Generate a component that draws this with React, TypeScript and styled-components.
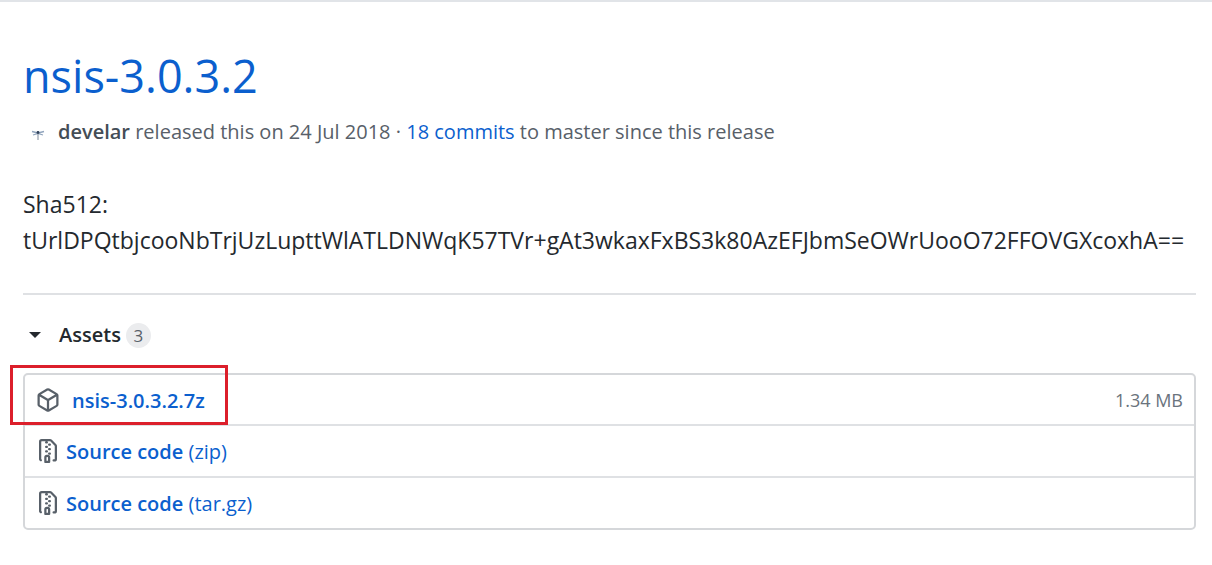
import React from "react";
import styled, { createGlobalStyle } from "styled-components";

const GlobalStyle = createGlobalStyle`
  *, *::before, *::after { box-sizing: border-box; }
  body {
    margin: 0;
    background: #fff;
    color: #24292e;
    font-family: "Segoe UI", "Open Sans", "Noto Sans", sans-serif;
  }
`;

const Release = styled.main`
  border-top: 2px solid #e1e4e8;
  padding: 44px 16px 36px 23px;
`;

const Link = styled.a<{ $strong?: boolean }>`
  color: #0b5fce;
  font-weight: ${(p) => (p.$strong ? 600 : 400)};
  text-decoration: none;
`;

const Title = styled.h1`
  margin: 0;
  font-size: 45px;
  font-weight: 400;
  line-height: 60px;
`;

const Meta = styled.p`
  display: flex;
  align-items: center;
  margin: 11px 0 0;
  font-size: 20px;
  line-height: 30px;
  color: #586069;
`;

const Avatar = styled.svg`
  flex: none;
  width: 30px;
  height: 30px;
  margin-right: 5px;
`;

const Author = styled.strong`
  font-weight: 600;
  color: #444d56;
`;

const Notes = styled.p`
  margin: 39px 0 35px;
  font-size: 23px;
  line-height: 36px;
  overflow-wrap: anywhere;
`;

const Assets = styled.details`
  border-top: 2px solid #dfe1e4;
  padding-top: 25px;
`;

const Summary = styled.summary`
  display: flex;
  align-items: center;
  list-style: none;
  font-size: 20px;
  font-weight: 600;
  line-height: 30px;
  cursor: pointer;
`;

const Caret = styled.span`
  margin: 0 18px 0 6px;
  border: 6px solid transparent;
  border-top-color: #24292e;
  border-bottom-width: 0;
`;

const Counter = styled.span`
  min-width: 25px;
  margin-left: 5px;
  border-radius: 13px;
  background: #ebecee;
  color: #586069;
  font-size: 17px;
  font-weight: 500;
  line-height: 25px;
  text-align: center;
`;

const FileList = styled.ul`
  margin: 23px 0 0;
  padding: 0;
  border: 2px solid #d5d7da;
  border-radius: 5px;
  list-style: none;
`;

const FileRow = styled.li`
  position: relative;
  display: flex;
  align-items: center;
  padding: 9px 11px 8px;
  font-size: 20px;
  line-height: 30px;

  & + & {
    padding-bottom: 9px;
    border-top: 2px solid #dfe1e4;
  }

  & > a {
    padding-top: 2px;
  }
`;

const Icon = styled.svg<{ $gap: number }>`
  flex: none;
  width: 24px;
  height: 24px;
  margin-right: ${(p) => p.$gap}px;
  fill: #586069;
`;

const Size = styled.small`
  margin-left: auto;
  color: #6a737d;
  font-size: 18px;
`;

const Highlight = styled.span`
  position: absolute;
  z-index: 1;
  top: -10px;
  left: -15px;
  width: 218px;
  height: 60px;
  border: 3px solid #dc1f2b;
  pointer-events: none;
`;

const packagePath =
  "M8.878.392a1.75 1.75 0 00-1.756 0l-5.25 3.045A1.75 1.75 0 001 4.951v6.098c0 .624.332 1.2.872 1.514l5.25 3.045a1.75 1.75 0 001.756 0l5.25-3.045c.54-.313.872-.89.872-1.514V4.951c0-.624-.332-1.2-.872-1.514L8.878.392zM7.875 1.69a.25.25 0 01.25 0l4.63 2.685L8 7.133 3.245 4.375l4.63-2.685zM2.5 5.677v5.372c0 .09.047.171.125.216l4.625 2.683V8.432L2.5 5.677zm6.25 8.271l4.625-2.683a.25.25 0 00.125-.216V5.677L8.75 8.432v5.516z";
const zipPath =
  "M3.5 1.75a.25.25 0 01.25-.25h3a.75.75 0 000 1.5h.5a.75.75 0 000-1.5h2.086a.25.25 0 01.177.073l2.914 2.914a.25.25 0 01.073.177v8.586a.25.25 0 01-.25.25h-.5a.75.75 0 000 1.5h.5A1.75 1.75 0 0014 13.25V4.664c0-.464-.184-.909-.513-1.237L10.573.513A1.75 1.75 0 009.336 0H3.75A1.75 1.75 0 002 1.75v11.5c0 .649.353 1.214.874 1.515a.75.75 0 10.752-1.298.25.25 0 01-.126-.217V1.75zM8.75 3a.75.75 0 000 1.5h.5a.75.75 0 000-1.5h-.5zM6 5.25a.75.75 0 01.75-.75h.5a.75.75 0 010 1.5h-.5A.75.75 0 016 5.25zm2 1.5A.75.75 0 018.75 6h.5a.75.75 0 010 1.5h-.5A.75.75 0 018 6.75zm-1.25.75a.75.75 0 000 1.5h.5a.75.75 0 000-1.5h-.5zM8 9.75A.75.75 0 018.75 9h.5a.75.75 0 010 1.5h-.5A.75.75 0 018 9.75zm-.75.75a1.75 1.75 0 00-1.75 1.75v3c0 .414.336.75.75.75h2.5a.75.75 0 00.75-.75v-3a1.75 1.75 0 00-1.75-1.75h-.5zM7 12.25a.25.25 0 01.25-.25h.5a.25.25 0 01.25.25v2.25H7v-2.25z";

const archives = ["zip", "tar.gz"];

export default function App() {
  return (
    <>
      <GlobalStyle />
      <Release>
        <Title>
          <Link href="#release">nsis-3.0.3.2</Link>
        </Title>
        <Meta>
          <Avatar viewBox="0 0 30 30" aria-hidden="true">
            <path d="M9 14.5L15 16L21 14.5M10 18L15 16.5L20 18" fill="none" stroke="#91a5bd" strokeWidth="1.3" />
            <path d="M15 14V23" stroke="#7f8b9c" strokeWidth="1" />
            <circle cx="15" cy="15.5" r="1.4" fill="#33445c" />
          </Avatar>
          <span>
            <Author>develar</Author> released this on 24 Jul 2018 ·{" "}
            <Link href="#commits">18 commits</Link> to master since this release
          </span>
        </Meta>
        <Notes>
          Sha512:
          <br />
          tUrlDPQtbjcooNbTrjUzLupttWlATLDNWqK57TVr+gAt3wkaxFxBS3k80AzEFJbmSeOWrUooO72FFOVGXcoxhA==
        </Notes>
        <Assets open>
          <Summary>
            <Caret />
            Assets
            <Counter>3</Counter>
          </Summary>
          <FileList>
            <FileRow>
              <Icon $gap={12} viewBox="0 0 16 16" aria-hidden="true">
                <path d={packagePath} fillRule="evenodd" />
              </Icon>
              <Link $strong href="#nsis">nsis-3.0.3.2.7z</Link>
              <Size>1.34 MB</Size>
              <Highlight />
            </FileRow>
            {archives.map((kind) => (
              <FileRow key={kind}>
                <Icon $gap={6} viewBox="0 0 16 16" aria-hidden="true">
                  <path d={zipPath} fillRule="evenodd" />
                </Icon>
                <Link href={`#${kind}`}>
                  <Link as="strong" $strong>Source code</Link> ({kind})
                </Link>
              </FileRow>
            ))}
          </FileList>
        </Assets>
      </Release>
    </>
  );
}
